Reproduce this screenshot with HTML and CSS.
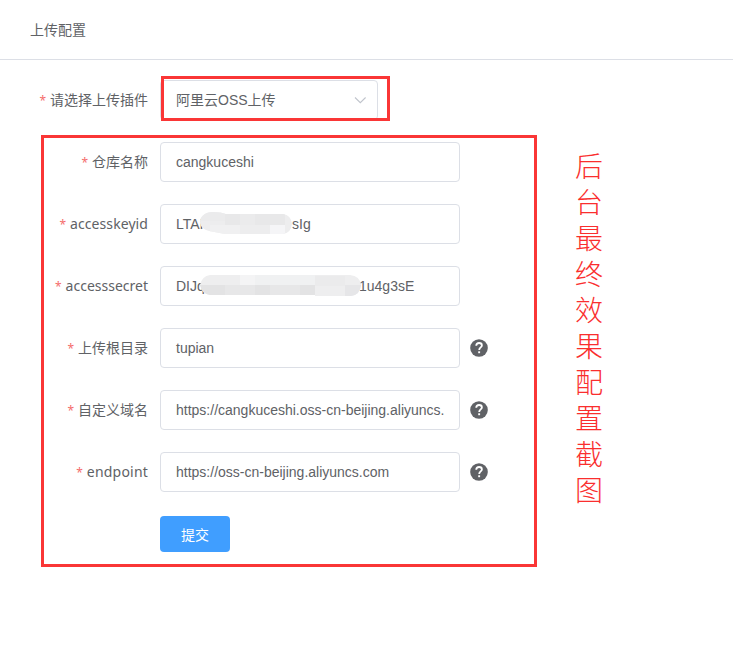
FILE: index.html
```html
<!DOCTYPE html>
<html lang="zh-CN">
<head>
<meta charset="utf-8">
<title>上传配置</title>
<link rel="stylesheet" href="styles.css">
</head>
<body>
<header class="header">上传配置</header>
<main class="form">
  <div class="row">
    <label class="label">请选择上传插件</label>
    <div class="field select"><span>阿里云OSS上传</span>
      <svg class="chevron" width="14" height="14" viewBox="0 0 14 14"><path d="M2 4.5 7.3 9.7l5.3-5.2" fill="none" stroke="#c0c4cc" stroke-width="1.1"/></svg>
    </div>
  </div>
  <div class="row">
    <label class="label">仓库名称</label>
    <div class="field">cangkuceshi</div>
  </div>
  <div class="row">
    <label class="label latin keyid">accesskeyid</label>
    <div class="field"><span>LTAI</span>
      <svg class="mask" width="93" height="22" viewBox="0 0 93 22">
        <clipPath id="a"><path d="M0 11C0 4 5 0 13 0q8 0 13 2h57q8 1 9 10-1 9-9 10H25L9 19Q1 17 0 11z"/></clipPath>
        <g clip-path="url(#a)" shape-rendering="crispEdges"><path fill="#ededee" d="M0 0h93v22H0z"/><path fill="#e8e8e9" d="M25 2h15v11H25zM55 2h30v11H55z"/><path fill="#ebebec" d="M0 0h25v9H0zM40 2h15v11H40z"/><path fill="#f0f0f1" d="M10 13h30v9H10z"/><path fill="#f5f5f7" d="M70 13h15v9H70z"/></g>
      </svg>
      <span class="tail key">sIg</span>
    </div>
  </div>
  <div class="row">
    <label class="label latin">accesssecret</label>
    <div class="field"><span>DIJq</span>
      <svg class="mask secret" width="161" height="21" viewBox="0 0 161 21">
        <clipPath id="b"><path d="M0 10Q2 1 10 0h140q10 1 11 10-1 10-10 11h-36v-1H10Q2 19 0 10z"/></clipPath>
        <g clip-path="url(#b)" shape-rendering="crispEdges"><path fill="#eeeeef" d="M0 0h161v21H0z"/><path fill="#f4f4f5" d="M40 0h15v10H40z"/><path fill="#f0f1f2" d="M55 0h60v10H55z"/><path fill="#e3e3e4" d="M0 10h25v11H0zM55 10h15v11H55zM100 10h15v11h-15z"/><path fill="#e7e7e8" d="M25 10h30v11H25zM70 10h30v11H70z"/><path fill="#ebebec" d="M115 1h30v10h-30z"/><path fill="#e6e6e8" d="M145 10h16v11h-16z"/></g>
      </svg>
      <span class="tail code">1u4g3sE</span>
    </div>
  </div>
  <div class="row">
    <label class="label">上传根目录</label>
    <div class="field">tupian</div>
    <svg class="help" viewBox="0 0 18 18"><circle cx="9" cy="9" r="8.8"/><path d="M6.2 6.7C6.3 5 7.4 4 9.1 4c1.8 0 2.8.9 2.8 2.4 0 2-2.7 2-2.7 4.5"/><path d="M8.2 12.3h1.9v1.9H8.2z" class="dot"/></svg>
  </div>
  <div class="row">
    <label class="label">自定义域名</label>
    <div class="field">https://cangkuceshi.oss-cn-beijing.aliyuncs.</div>
    <svg class="help" viewBox="0 0 18 18"><circle cx="9" cy="9" r="8.8"/><path d="M6.2 6.7C6.3 5 7.4 4 9.1 4c1.8 0 2.8.9 2.8 2.4 0 2-2.7 2-2.7 4.5"/><path d="M8.2 12.3h1.9v1.9H8.2z" class="dot"/></svg>
  </div>
  <div class="row">
    <label class="label latin endpoint">endpoint</label>
    <div class="field">https://oss-cn-beijing.aliyuncs.com</div>
    <svg class="help" viewBox="0 0 18 18"><circle cx="9" cy="9" r="8.8"/><path d="M6.2 6.7C6.3 5 7.4 4 9.1 4c1.8 0 2.8.9 2.8 2.4 0 2-2.7 2-2.7 4.5"/><path d="M8.2 12.3h1.9v1.9H8.2z" class="dot"/></svg>
  </div>
  <button class="submit" type="button">提交</button>
</main>
<div class="outline outline-select"></div>
<div class="outline outline-form"></div>
<div class="note">后台最终效果配置截图</div>
</body>
</html>
```
FILE: styles.css
```css
* { box-sizing: border-box; }
body {
  position: relative;
  margin: 0;
  height: 670px;
  overflow: hidden;
  background: #fff;
  color: #606266;
  font: 14px/40px "Liberation Sans", "Noto Sans CJK SC", sans-serif;
}
.header {
  height: 60px;
  padding-left: 30px;
  line-height: 60px;
  border-bottom: 1px solid #dcdfe6;
}
.form {
  display: flex;
  flex-direction: column;
  gap: 22px;
  padding-top: 20px;
}
.row { display: flex; align-items: center; height: 40px; }
.label {
  width: 160px;
  padding-right: 12px;
  text-align: right;
  white-space: nowrap;
}
.label::before {
  content: "*";
  margin-right: 4px;
  color: #f56c6c;
  font: 12px/1 "Noto Sans", sans-serif;
  letter-spacing: 0;
}
.latin { font-family: "Noto Sans", sans-serif; }
.keyid { letter-spacing: 0.08px; }
.endpoint { letter-spacing: 0.2px; }
.field {
  position: relative;
  width: 300px;
  height: 40px;
  padding: 0 15px;
  line-height: 38px;
  border: 1px solid #dcdfe6;
  border-radius: 4px;
  white-space: nowrap;
}
.select {
  display: flex;
  align-items: center;
  justify-content: space-between;
  width: 218px;
  padding-right: 10px;
}
.mask { position: absolute; left: 39px; top: 7px; z-index: 1; }
.secret { top: 8px; }
.tail { position: absolute; top: 0; }
.key { left: 131px; }
.code { left: 198px; }
.help { width: 18px; height: 18px; margin: -1px 0 0 10px; fill: #606266; }
.help path { fill: none; stroke: #fff; stroke-width: 1.8; }
.help .dot { fill: #fff; stroke: none; }
.submit {
  width: 70px;
  height: 36px;
  margin: 2px 0 0 160px;
  padding: 0;
  border: 0;
  border-radius: 4px;
  background: #409eff;
  color: #fff;
  font: 14px/34px "Noto Sans CJK SC", sans-serif;
}
.outline { position: absolute; border: 3px solid #fa3636; }
.outline-select { left: 161px; top: 76px; width: 229px; height: 45px; }
.outline-form { left: 41px; top: 135px; width: 496px; height: 432px; }
.note {
  position: absolute;
  left: 575px;
  top: 147px;
  width: 28px;
  color: #fa2e2e;
  font: 300 28px/36px "Noto Sans CJK SC", sans-serif;
  word-break: break-all;
}
```
